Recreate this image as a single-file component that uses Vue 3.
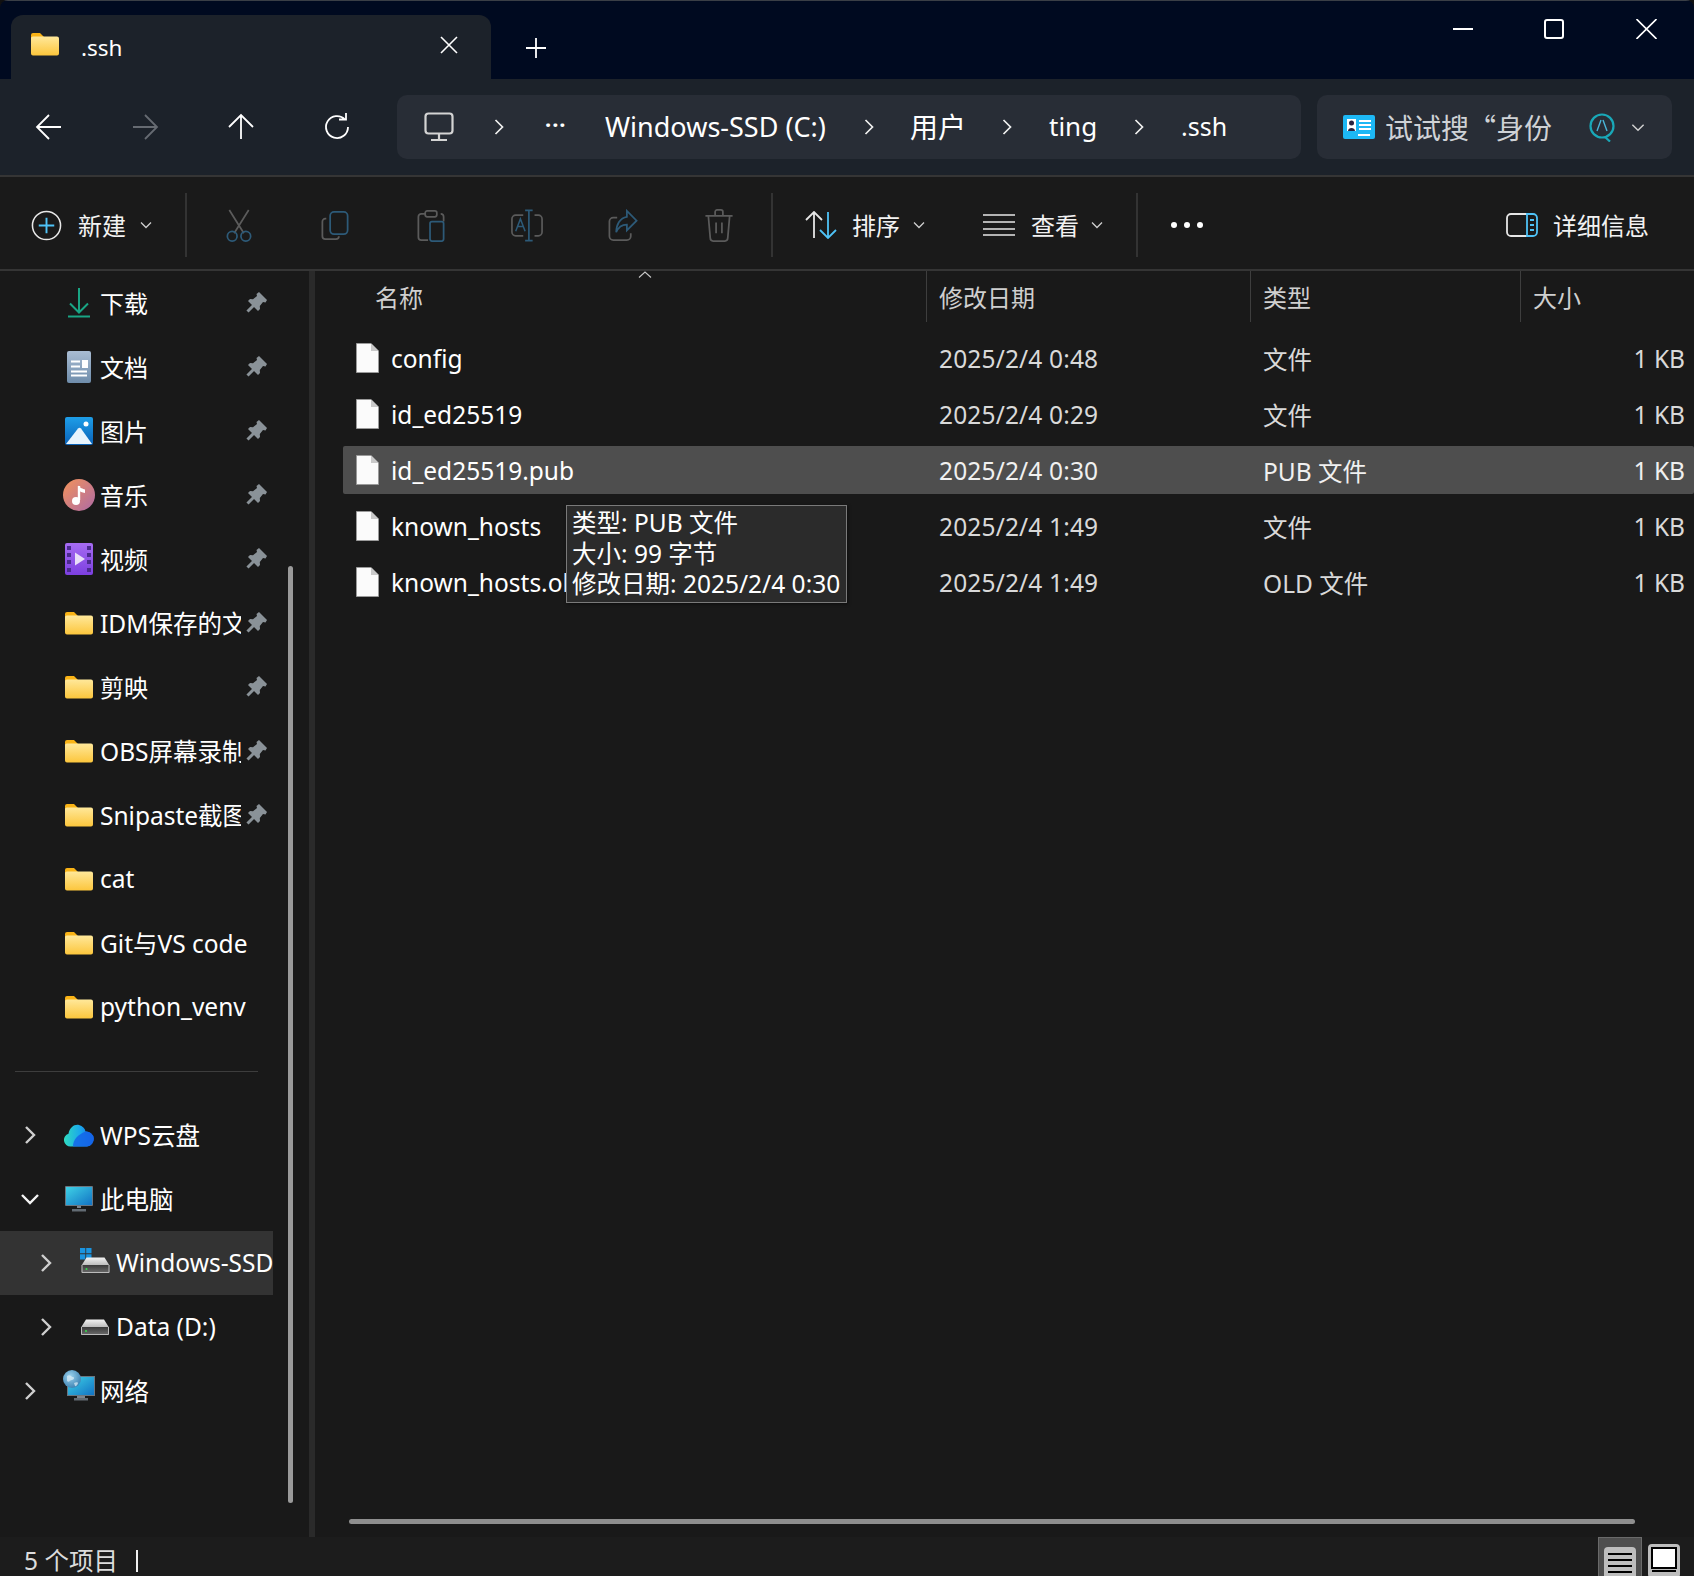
<script setup>
const pinned = [
  { icon: 'i-dl', t: '下载', cjk: true },
  { icon: 'i-doc', t: '文档', cjk: true },
  { icon: 'i-pic', t: '图片', cjk: true },
  { icon: 'i-music', t: '音乐', cjk: true },
  { icon: 'i-video', t: '视频', cjk: true },
  { icon: 'i-folder', t: 'IDM保存的文件' },
  { icon: 'i-folder', t: '剪映', cjk: true },
  { icon: 'i-folder', t: 'OBS屏幕录制' },
  { icon: 'i-folder', t: 'Snipaste截图' },
]
const plain = [
  { icon: 'i-folder', t: 'cat' },
  { icon: 'i-folder', t: 'Git与VS code' },
  { icon: 'i-folder', t: 'python_venv' },
]
const tree = [
  { icon: 'i-cloud', t: 'WPS云盘', arrow: 'r' },
  { icon: 'i-pc', t: '此电脑', arrow: 'd' },
  { icon: 'i-win', t: 'Windows-SSD (C:)', arrow: 'r', sub: true, sel: true },
  { icon: 'i-drive', t: 'Data (D:)', arrow: 'r', sub: true },
  { icon: 'i-net', t: '网络', arrow: 'r' },
]
const files = [
  { n: 'config', d: '2025/2/4 0:48', ty: '文件' },
  { n: 'id_ed25519', d: '2025/2/4 0:29', ty: '文件' },
  { n: 'id_ed25519.pub', d: '2025/2/4 0:30', ty: 'PUB 文件', sel: true },
  { n: 'known_hosts', d: '2025/2/4 1:49', ty: '文件' },
  { n: 'known_hosts.old', d: '2025/2/4 1:49', ty: 'OLD 文件' },
]
</script>

<template>
  <div class="win">
    <svg class="defs" width="0" height="0">
      <defs>
        <linearGradient id="gF" x1="0" y1="0" x2="0" y2="1"><stop offset="0" stop-color="#ffe89a"/><stop offset="1" stop-color="#fcc63c"/></linearGradient>
        <linearGradient id="gD" x1="0" y1="0" x2="0" y2="1"><stop offset="0" stop-color="#a9bdd3"/><stop offset="1" stop-color="#6f8dab"/></linearGradient>
        <linearGradient id="gP" x1="0" y1="0" x2="0" y2="1"><stop offset="0" stop-color="#1e9ee8"/><stop offset="1" stop-color="#0a62b8"/></linearGradient>
        <linearGradient id="gM" x1="0" y1="0" x2="1" y2="1"><stop offset="0" stop-color="#f3935a"/><stop offset="1" stop-color="#ae6aa6"/></linearGradient>
        <linearGradient id="gV" x1="0" y1="0" x2="0" y2="1"><stop offset="0" stop-color="#a66cf2"/><stop offset="1" stop-color="#7c3fe0"/></linearGradient>
        <linearGradient id="gC" x1="0" y1="0" x2="1" y2="0"><stop offset="0" stop-color="#2fdcc0"/><stop offset=".55" stop-color="#1aa7ec"/><stop offset="1" stop-color="#1464e8"/></linearGradient>
        <linearGradient id="gS" x1="0" y1="0" x2="1" y2="1"><stop offset="0" stop-color="#3fd2e6"/><stop offset="1" stop-color="#1273c4"/></linearGradient>
        <linearGradient id="gH" x1="0" y1="0" x2="0" y2="1"><stop offset="0" stop-color="#f2f2f2"/><stop offset="1" stop-color="#b9b9b9"/></linearGradient>
        <linearGradient id="gB" x1="0" y1="0" x2="0" y2="1"><stop offset="0" stop-color="#3a3a3a"/><stop offset="1" stop-color="#6d6d6d"/></linearGradient>
        <radialGradient id="gG" cx=".4" cy=".35" r=".7"><stop offset="0" stop-color="#9cd3ee"/><stop offset="1" stop-color="#3a7fb0"/></radialGradient>

        <symbol id="i-folder" viewBox="0 0 28 24">
          <path d="M0 3a2 2 0 0 1 2-2h7l4 4v3H0z" fill="#f9b316"/>
          <path d="M0 7a2 2 0 0 1 2-2.500h24a2 2 0 0 1 2 2V21.500a2 2 0 0 1-2 2H2a2 2 0 0 1-2-2z" fill="url(#gF)"/>
        </symbol>
        <symbol id="i-dl" viewBox="0 0 28 32">
          <path d="M14 1V25M5 16.500L14 25.500L23 16.500" fill="none" stroke="#19a584" stroke-width="2"/>
          <path d="M3 29.500H25" stroke="#19a584" stroke-width="2"/>
        </symbol>
        <symbol id="i-doc" viewBox="0 0 28 32">
          <rect x="2" y="0" width="24" height="32" rx="2" fill="url(#gD)"/>
          <path d="M6 10.500H15M6 15.500H15M6 20.500H22" stroke="#fff" stroke-width="2"/>
          <path d="M6 24.500H22" stroke="#fff" stroke-width="2"/>
          <rect x="17" y="9" width="6" height="8" fill="#fff"/>
        </symbol>
        <symbol id="i-pic" viewBox="0 0 28 28">
          <rect width="28" height="28" rx="2" fill="url(#gP)"/>
          <circle cx="21" cy="7" r="2.500" fill="#fff"/>
          <path d="M1 27L13 11.500a2 2 0 0 1 3 0L27 27z" fill="#e8f4fd"/>
        </symbol>
        <symbol id="i-music" viewBox="0 0 32 32">
          <circle cx="16" cy="16" r="16" fill="url(#gM)"/>
          <path d="M16 7v14" stroke="#fff" stroke-width="2.400"/>
          <path d="M15 6.500c2 3 5 3 7 4v3.500c-3-.5-5-1.500-7-3z" fill="#fff"/>
          <circle cx="13" cy="22" r="4" fill="#fff"/>
        </symbol>
        <symbol id="i-video" viewBox="0 0 28 32">
          <rect width="28" height="32" rx="2" fill="url(#gV)"/>
          <g fill="#4b2a8e">
            <rect x="2" y="3" width="4" height="4"/><rect x="2" y="10" width="4" height="4"/><rect x="2" y="17" width="4" height="4"/><rect x="2" y="25" width="4" height="4"/>
            <rect x="22" y="3" width="4" height="4"/><rect x="22" y="10" width="4" height="4"/><rect x="22" y="17" width="4" height="4"/><rect x="22" y="25" width="4" height="4"/>
          </g>
          <path d="M10 9.500L20 16L10 22.500z" fill="#e8def8"/>
        </symbol>
        <symbol id="i-cloud" viewBox="0 0 30 23">
          <path d="M6.500 22.500A6.500 6.500 0 0 1 4.500 9.800C5.500 3.500 10.500 0 15 1c3.500.8 6 3.500 6.500 6.500A7.500 7.500 0 0 1 23 22.500z" fill="url(#gC)"/>
          <path d="M9 22.500c0-7 5-12 12.500-15A7.500 7.500 0 0 1 23 22.500z" fill="#1464e8" opacity=".85"/>
        </symbol>
        <symbol id="i-pc" viewBox="0 0 28 26">
          <rect width="28" height="20" rx="1" fill="#6b7680"/>
          <rect x="1" y="1" width="26" height="18" fill="url(#gS)"/>
          <path d="M12 20h4v2h-4z" fill="#7b858e"/>
          <path d="M7 23h14v2.500H7z" fill="#626b73"/>
        </symbol>
        <symbol id="i-drive" viewBox="0 0 28 16">
          <path d="M5 .5h18l5 8H0z" fill="url(#gH)"/>
          <rect x="0" y="8" width="28" height="8" rx="1" fill="url(#gB)"/>
          <path d="M.5 8v7.500h27V8" fill="none" stroke="#bbb"/>
          <circle cx="5" cy="12" r="1" fill="#33e04a"/>
        </symbol>
        <symbol id="i-win" viewBox="0 0 30 26">
          <path d="M0 0h5.300v5.300H0zM6.200 0h5.300v5.300H6.200zM0 6.200h5.300v5.300H0zM6.200 6.200h5.300v5.300H6.200z" fill="#1a94e0"/>
          <g transform="translate(1.500 9)">
            <path d="M5 .5h18l5 8H0z" fill="url(#gH)"/>
            <rect x="0" y="8" width="28" height="8" rx="1" fill="url(#gB)"/>
            <path d="M.5 8v7.500h27V8" fill="none" stroke="#bbb"/>
            <circle cx="5" cy="12" r="1" fill="#33e04a"/>
          </g>
        </symbol>
        <symbol id="i-net" viewBox="0 0 32 32">
          <rect x="4" y="6" width="28" height="20" fill="#6b7680"/>
          <rect x="5" y="7" width="26" height="18" fill="url(#gS)"/>
          <path d="M14 26h8v2h-8z" fill="#7b858e"/>
          <path d="M11 28h14v2.500H11z" fill="#626b73"/>
          <circle cx="9" cy="9" r="9" fill="url(#gG)"/>
          <path d="M4 6c3-2 4 1 6 1s1 3-1 3-3 3-5 1zM11 13c2-1 4-1 4 0s-2 4-3 3z" fill="#dfeff8" opacity=".7"/>
        </symbol>
        <symbol id="i-pin" viewBox="0 0 21 21">
          <path d="M13 0L21 8L19.500 10.500L17 10L13.800 14L14 17L12 19L2 9L4 7L7 7.200L11 4L10.500 2z" fill="#8a9298"/>
          <path d="M7.500 13.500L1.500 19.500" stroke="#8a9298" stroke-width="3"/>
        </symbol>
        <symbol id="i-file" viewBox="0 0 23 30">
          <path d="M.5.500H15L22.500 8V29.500H.5z" fill="#fbfbfb" stroke="#9a9a9a"/>
          <path d="M15 .5V8H22.500z" fill="#c9c9c9"/>
        </symbol>
        <symbol id="i-r" viewBox="0 0 12 20"><path d="M2 2L10 10L2 18" fill="none" stroke="#cfcfcf" stroke-width="2.400"/></symbol>
        <symbol id="i-a" viewBox="0 0 10 16"><path d="M1.500 1L8.500 8L1.500 15" fill="none" stroke="#f0f0f0" stroke-width="1.700"/></symbol>
        <symbol id="i-d" viewBox="0 0 20 12"><path d="M2 2L10 10L18 2" fill="none" stroke="#f4f4f4" stroke-width="2.400"/></symbol>
        <symbol id="i-cv" viewBox="0 0 12 8"><path d="M1 1.500L6 6.500L11 1.500" fill="none" stroke="#cfcfcf" stroke-width="1.300"/></symbol>
      </defs>
    </svg>

    <header class="titlebar">
      <div class="tab">
        <svg class="tab-folder"><use href="#i-folder"/></svg>
        <span class="tab-text">.ssh</span>
        <svg class="tab-x" viewBox="0 0 18 18"><path d="M1 1L17 17M17 1L1 17" stroke="#fff" stroke-width="1.600"/></svg>
      </div>
      <svg class="tab-plus" viewBox="0 0 20 20"><path d="M10 0V20M0 10H20" stroke="#fff" stroke-width="1.800"/></svg>
      <div class="controls">
        <svg class="c-min" viewBox="0 0 20 2"><path d="M0 1H20" stroke="#fff" stroke-width="2"/></svg>
        <svg class="c-max" viewBox="0 0 20 20"><rect x="1" y="1" width="18" height="18" rx="2" fill="none" stroke="#fff" stroke-width="2"/></svg>
        <svg class="c-close" viewBox="0 0 20 20"><path d="M0 0L20 20M20 0L0 20" stroke="#fff" stroke-width="1.600"/></svg>
      </div>
    </header>

    <nav class="nav">
      <div class="nav-btns">
        <svg class="nb" viewBox="0 0 26 26"><path d="M1 13H25M13 1L1 13L13 25" fill="none" stroke="#fff" stroke-width="1.800"/></svg>
        <svg class="nb" viewBox="0 0 26 26"><path d="M1 13H25M13 1L25 13L13 25" fill="none" stroke="#666b72" stroke-width="1.800"/></svg>
        <svg class="nb" viewBox="0 0 26 26"><path d="M13 25V1M1 13L13 1L25 13" fill="none" stroke="#fff" stroke-width="1.800"/></svg>
        <svg class="nb" viewBox="0 0 26 26"><path d="M21 5.500A11 11 0 1 0 24 13M15 5.500H22V-1" fill="none" stroke="#fff" stroke-width="1.800"/></svg>
      </div>
      <div class="addr">
        <svg class="a-pc" viewBox="0 0 30 30"><rect x="1.500" y="1.500" width="27" height="20" rx="3" fill="none" stroke="#d4d4d4" stroke-width="2.200"/><path d="M15 22V27M7 28H23" stroke="#d4d4d4" stroke-width="2.200"/></svg>
        <svg class="a-ch ch1"><use href="#i-a"/></svg>
        <span class="a-dots">···</span>
        <span class="a-t t1">Windows-SSD (C:)</span>
        <svg class="a-ch ch2"><use href="#i-a"/></svg>
        <span class="a-t t2 z">用户</span>
        <svg class="a-ch"><use href="#i-a"/></svg>
        <span class="a-t t3">ting</span>
        <svg class="a-ch"><use href="#i-a"/></svg>
        <span class="a-t t4">.ssh</span>
      </div>
      <div class="search">
        <svg class="s-card" viewBox="0 0 32 24"><rect width="32" height="24" rx="2" fill="#1db8f5"/><path d="M4 4h9v12H4z" fill="#fff"/><circle cx="8.500" cy="8" r="2.500" fill="#2a2340"/><path d="M5 16c0-4 7-4 7 0z" fill="#2a2340"/><path d="M16 6h12M16 10h12M16 14h12" stroke="#fff" stroke-width="2"/><path d="M15 20h12" stroke="#fff" stroke-width="2"/></svg>
        <span class="s-t z">试试搜</span>
        <span class="s-t s-t2 z">“身份</span>
        <svg class="s-q" viewBox="0 0 26 30"><circle cx="13" cy="14" r="11.500" fill="none" stroke="#19a8b8" stroke-width="2.200"/><path d="M16 25L21 29.500" stroke="#19a8b8" stroke-width="2.200"/><path d="M8 19L12 8M14 8L18 19" fill="none" stroke="#4bb5d8" stroke-width="1.400"/></svg>
        <svg class="s-cv"><use href="#i-cv"/></svg>
      </div>
    </nav>

    <div class="toolbar">
      <svg class="t-new" viewBox="0 0 32 32"><circle cx="16" cy="16" r="14.500" fill="none" stroke="#e8e8e8" stroke-width="1.600"/><path d="M16 8V24M8 16H24" stroke="#4fc3f7" stroke-width="2"/></svg>
      <span class="t-lab z l-new">新建</span>
      <svg class="t-cv cv-new"><use href="#i-cv"/></svg>
      <i class="t-sep sep1"></i>
      <svg class="t-ic ic-cut" viewBox="0 0 30 34"><path d="M5 1L20 25M25 1L10 25" stroke="#5b5b5b" stroke-width="1.800"/><circle cx="8" cy="28" r="5" fill="none" stroke="#2d5a78" stroke-width="1.800"/><circle cx="22" cy="28" r="5" fill="none" stroke="#2d5a78" stroke-width="1.800"/></svg>
      <svg class="t-ic" viewBox="0 0 30 34"><rect x="10" y="3" width="18" height="23" rx="4" fill="none" stroke="#2d5a78" stroke-width="1.800"/><path d="M6 10H5a3 3 0 0 0-3 3v15a3 3 0 0 0 3 3h11a3 3 0 0 0 3-3" fill="none" stroke="#5b5b5b" stroke-width="1.800"/></svg>
      <svg class="t-ic" viewBox="0 0 30 34"><path d="M9 5H5a3 3 0 0 0-3 3v21a3 3 0 0 0 3 3h7M25 5a3 3 0 0 1 3 3v5" fill="none" stroke="#5b5b5b" stroke-width="1.800"/><rect x="9" y="2" width="12" height="6" rx="2" fill="none" stroke="#5b5b5b" stroke-width="1.800"/><rect x="14" y="13" width="14" height="20" rx="2" fill="none" stroke="#2d5a78" stroke-width="1.800"/></svg>
      <svg class="t-ic" viewBox="0 0 34 34"><path d="M13 6H5a4 4 0 0 0-4 4v14a4 4 0 0 0 4 4h8M25 6h4a4 4 0 0 1 4 4v14a4 4 0 0 1-4 4h-4" fill="none" stroke="#5b5b5b" stroke-width="1.800"/><path d="M19 1V33M15 1H23M15 33H23" stroke="#2d5a78" stroke-width="1.800"/><path d="M5 23L10 10L15 23M7 18H13" fill="none" stroke="#2d5a78" stroke-width="1.600"/></svg>
      <svg class="t-ic" viewBox="0 0 30 34"><path d="M9 9H5a4 4 0 0 0-4 4v15a4 4 0 0 0 4 4h14a4 4 0 0 0 4-4v-3" fill="none" stroke="#5b5b5b" stroke-width="1.800"/><path d="M19 2L29 12L19 22V16C14 16 10 19 8 24C8 16 12 9 19 8z" fill="none" stroke="#2d5a78" stroke-width="1.800"/></svg>
      <svg class="t-ic" viewBox="0 0 30 34"><path d="M1 7H29M11 7V3a2 2 0 0 1 2-2h4a2 2 0 0 1 2 2v4M4 7L6 30a3 3 0 0 0 3 3h12a3 3 0 0 0 3-3L26 7M12 14V25M18 14V25" fill="none" stroke="#5b5b5b" stroke-width="1.800"/></svg>
      <i class="t-sep sep2"></i>
      <svg class="t-sort" viewBox="0 0 32 28"><path d="M9 27V1M1 9L9 1L17 9" fill="none" stroke="#e6e6e6" stroke-width="1.800"/><path d="M23 1V27M15 19L23 27L31 19" fill="none" stroke="#4fc3f7" stroke-width="1.800"/></svg>
      <span class="t-lab z l-sort">排序</span>
      <svg class="t-cv cv-sort"><use href="#i-cv"/></svg>
      <svg class="t-list" viewBox="0 0 32 22"><path d="M0 1H32M0 8H32M0 15H32M0 21H32" stroke="#e6e6e6" stroke-width="1.600"/></svg>
      <span class="t-lab z l-view">查看</span>
      <svg class="t-cv cv-view"><use href="#i-cv"/></svg>
      <i class="t-sep sep3"></i>
      <div class="t-dots"><i></i><i></i><i></i></div>
      <svg class="t-det" viewBox="0 0 32 24"><path d="M21 1H5a4 4 0 0 0-4 4V19a4 4 0 0 0 4 4H21" fill="none" stroke="#e6e6e6" stroke-width="1.800"/><path d="M21 1h6a4 4 0 0 1 4 4V19a4 4 0 0 1-4 4h-6z" fill="none" stroke="#4fc3f7" stroke-width="1.800"/><path d="M24 7h4M24 12h4M24 17h4" stroke="#4fc3f7" stroke-width="1.800"/></svg>
      <span class="t-lab z l-det">详细信息</span>
    </div>

    <div class="body">
      <aside class="side">
        <div v-for="it in pinned" :key="it.t" class="s-row">
          <svg class="s-icon" :class="it.icon"><use :href="'#' + it.icon"/></svg>
          <span class="s-label" :class="{ z: it.cjk }">{{ it.t }}</span>
          <svg class="s-pin"><use href="#i-pin"/></svg>
        </div>
        <div v-for="it in plain" :key="it.t" class="s-row">
          <svg class="s-icon" :class="it.icon"><use :href="'#' + it.icon"/></svg>
          <span class="s-label wide">{{ it.t }}</span>
        </div>
        <div class="s-div"></div>
        <div v-for="it in tree" :key="it.t" class="s-row tree" :class="{ sub: it.sub, sel: it.sel }">
          <svg class="s-arrow" :class="it.arrow"><use :href="it.arrow === 'd' ? '#i-d' : '#i-r'"/></svg>
          <svg class="s-icon" :class="it.icon"><use :href="'#' + it.icon"/></svg>
          <span class="s-label wide">{{ it.t }}</span>
        </div>
        <div class="s-scroll"></div>
      </aside>
      <div class="split"></div>
      <main class="main">
        <div class="head">
          <div class="h-name z">名称</div>
          <div class="h-col z">修改日期</div>
          <div class="h-col z">类型</div>
          <div class="h-col z">大小</div>
          <svg class="caret" viewBox="0 0 14 7"><path d="M1 6.500L7 1L13 6.500" fill="none" stroke="#c8c8c8" stroke-width="1.100"/></svg>
        </div>
        <div class="list">
          <div v-for="f in files" :key="f.n" class="row" :class="{ sel: f.sel }">
            <div class="f-name">
              <svg class="f-ic"><use href="#i-file"/></svg>
              <span>{{ f.n }}</span>
            </div>
            <div class="f-date">{{ f.d }}</div>
            <div class="f-type">{{ f.ty }}</div>
            <div class="f-size">1 KB</div>
          </div>
        </div>
        <div class="tip">
          <div>类型: PUB 文件</div>
          <div>大小: 99 字节</div>
          <div>修改日期: 2025/2/4 0:30</div>
        </div>
        <div class="h-scroll"></div>
      </main>
    </div>

    <footer class="status">
      <span class="st-t">5 个项目</span>
      <i class="st-bar"></i>
      <div class="views">
        <div class="v-btn on">
          <svg class="v1" viewBox="0 0 32 30"><rect width="32" height="34" rx="4" fill="#bdbdbd"/><path d="M4 7H28M4 13H28M4 19H28M4 25H28" stroke="#000" stroke-width="2"/></svg>
        </div>
        <div class="v-btn off">
          <svg class="v2" viewBox="0 0 32 32"><rect width="32" height="34" rx="4" fill="#bdbdbd"/><rect x="4" y="4" width="24" height="20" fill="#fff" stroke="#000" stroke-width="2"/><path d="M4 27H28" stroke="#000" stroke-width="2"/></svg>
        </div>
      </div>
    </footer>
  </div>
</template>

<style>
html, body { margin: 0; background: #111; }
</style>

<style scoped>
.win {
  position: relative;
  width: 1694px;
  height: 1576px;
  display: flex;
  flex-direction: column;
  overflow: hidden;
  background: #191919;
  color: #fff;
  font-family: "Noto Sans", "Noto Sans CJK SC", sans-serif;
  font-size: 24.5px;
  border-radius: 8px 8px 0 0;
}
.defs { position: absolute; }
.z { font-family: "Noto Sans CJK SC", sans-serif; font-size: 24px; }

.titlebar {
  flex: 0 0 79px;
  box-sizing: border-box;
  display: flex;
  align-items: flex-end;
  background: #000a20;
  border-top: 1px solid #3a3f46;
  padding-left: 11px;
}
.tab {
  width: 480px;
  height: 64px;
  box-sizing: border-box;
  padding-left: 20px;
  display: flex;
  align-items: center;
  background: #1c222a;
  border-radius: 12px 12px 0 0;
}
.tab-folder { width: 28px; height: 24px; margin-top: -6px; }
.tab-text { margin-left: 22px; width: 40px; font-size: 22.500px; margin-top: 1px; }
.tab-x { width: 18px; height: 18px; margin-left: 319px; margin-top: -4px; }
.tab-plus { width: 20px; height: 20px; margin: 0 0 21px 35px; }
.controls {
  margin-left: auto;
  align-self: flex-start;
  display: flex;
  align-items: center;
  padding: 18px 37px 0 0;
}
.c-min { width: 20px; height: 2px; margin-right: 71px; }
.c-max { width: 20px; height: 20px; margin-right: 72px; }
.c-close { width: 21px; height: 20px; }

.nav {
  flex: 0 0 96px;
  box-sizing: border-box;
  display: flex;
  align-items: flex-start;
  background: #1c222a;
  padding: 16px 22px 0 0;
}
.nav-btns {
  width: 397px;
  height: 64px;
  flex: none;
  box-sizing: border-box;
  padding-left: 36px;
  display: flex;
  align-items: center;
  gap: 70px;
}
.nb { width: 26px; height: 26px; overflow: visible; }
.addr {
  width: 904px;
  height: 64px;
  flex: none;
  box-sizing: border-box;
  background: #282d36;
  border-radius: 10px;
  display: flex;
  align-items: center;
  padding-left: 27px;
}
.a-pc { width: 30px; height: 30px; flex: none; }
.a-ch { width: 10px; height: 16px; flex: none; margin-left: 37px; }
.a-ch.ch1 { margin-left: 40px; }
.a-ch.ch2 { margin-left: 23px; }
.a-dots { margin-left: 41px; width: 24px; font-size: 22px; font-weight: 700; letter-spacing: 1px; margin-top: -6px; flex: none; }
.a-t { color: #fff; white-space: nowrap; flex: none; margin-top: -2px; }
.t1 { margin-left: 36px; width: 236px; font-size: 27px; }
.t2 { margin-left: 36px; width: 55px; }
.t2.z { font-size: 28px; }
.t3 { margin-left: 37px; width: 48px; font-size: 26px; }
.t4 { margin-left: 37px; font-size: 25px; }
.search {
  margin-left: 16px;
  flex: none;
  width: 355px;
  height: 64px;
  box-sizing: border-box;
  background: #282d36;
  border-radius: 10px;
  display: flex;
  align-items: center;
  padding-left: 26px;
  color: #cfd2d6;
}
.s-card { width: 32px; height: 24px; flex: none; }
.s-t { margin-left: 10px; margin-top: -1px; }
.s-t.z { font-size: 28px; }
.s-t2 { margin-left: -1px; }
.s-q { width: 26px; height: 30px; margin-left: 37px; flex: none; }
.s-cv { width: 14px; height: 9px; margin-left: 16px; flex: none; }

.toolbar {
  flex: 0 0 96px;
  box-sizing: border-box;
  display: flex;
  align-items: center;
  background: #1a1a1a;
  border-top: 2px solid #353535;
  border-bottom: 2px solid #353535;
  padding: 4px 0 0 31px;
  position: relative;
}
.t-new { width: 31px; height: 31px; flex: none; }
.t-lab { color: #f2f2f2; white-space: nowrap; margin-top: -2px; }
.l-new { margin-left: 16px; width: 50px; }
.t-cv { width: 12px; height: 8px; flex: none; }
.cv-new { margin-left: 12px; }
.t-sep { flex: none; width: 2px; height: 64px; background: #333; }
.sep1 { margin-left: 33px; }
.t-ic { width: 32px; height: 33px; flex: none; margin-left: 64px; }
.ic-cut { margin-left: 36px; }
.sep2 { margin-left: 36px; }
.t-sort { width: 32px; height: 28px; flex: none; margin-left: 32px; }
.l-sort { margin-left: 15px; width: 50px; }
.cv-sort { margin-left: 11px; }
.t-list { width: 32px; height: 22px; flex: none; margin-left: 58px; }
.l-view { margin-left: 16px; width: 50px; }
.cv-view { margin-left: 10px; }
.sep3 { margin-left: 33px; }
.t-dots { display: flex; gap: 7px; margin-left: 33px; }
.t-dots i { width: 6px; height: 6px; border-radius: 50%; background: #fff; display: block; }
.t-det { width: 32px; height: 24px; flex: none; margin-left: 303px; }
.l-det { margin-left: 15px; }

.body { flex: 1; display: flex; min-height: 0; position: relative; }
.side { width: 309px; flex: none; position: relative; overflow: hidden; }
.s-row {
  height: 64px;
  width: 273px;
  display: flex;
  align-items: center;
  position: relative;
  box-sizing: border-box;
  padding-left: 65px;
}
.s-row.tree.sub { padding-left: 81px; }
.s-row.sel { background: #333; }
.s-icon { width: 28px; height: 24px; flex: none; overflow: visible; }
.s-icon.i-dl, .s-icon.i-doc, .s-icon.i-video { height: 32px; }
.s-icon.i-pic { height: 28px; }
.s-icon.i-music { width: 32px; height: 32px; margin: 0 -2px; }
.s-icon.i-cloud { width: 30px; height: 23px; margin: 0 -1px; }
.s-icon.i-win { width: 30px; height: 26px; margin: -4px -1px 0; }
.s-icon.i-drive { height: 16px; }
.s-icon.i-pc { height: 26px; }
.s-icon.i-net { width: 32px; height: 32px; margin: -10px -2px 0; }
.s-label {
  margin: -2px 0 0 7px;
  width: 141px;
  overflow: hidden;
  white-space: nowrap;
  flex: none;
}
.s-label.wide { width: 170px; }
.s-row.sub .s-label.wide { width: 157px; }
.s-pin { width: 21px; height: 21px; position: absolute; left: 246px; top: 21px; }
.s-arrow { position: absolute; left: 24px; top: 22px; width: 12px; height: 20px; }
.s-arrow.d { width: 20px; height: 12px; left: 20px; top: 26px; }
.s-row.sub .s-arrow { left: 40px; }
.s-div { height: 1px; margin: 32px 0 31px 15px; width: 243px; background: #3d3d3d; }
.s-scroll {
  position: absolute;
  left: 288px;
  top: 295px;
  width: 5px;
  height: 937px;
  background: #9a9a9a;
  border-radius: 3px;
}
.split { width: 6px; flex: none; background: #2a2a2a; }
.main { flex: 1; position: relative; min-width: 0; }

.head {
  display: grid;
  grid-template-columns: 611px 324px 270px 174px;
  height: 51px;
  color: #cfcfcf;
  position: relative;
}
.h-name { padding-left: 60px; line-height: 51px; }
.h-col { padding-left: 12px; border-left: 1px solid #3e3e3e; line-height: 51px; }
.caret { position: absolute; left: 323px; top: 0; width: 14px; height: 7px; }

.list { padding: 12px 0 0 28px; display: flex; flex-direction: column; gap: 8px; }
.row {
  height: 48px;
  display: grid;
  grid-template-columns: 583px 324px 270px 165px;
  align-items: center;
  border-radius: 2px;
}
.row.sel { background: #4e4e4e; }
.f-name { display: flex; align-items: center; padding-left: 13px; white-space: nowrap; }
.f-ic { width: 23px; height: 30px; flex: none; margin-right: 12px; }
.f-date, .f-type { padding-left: 13px; }
.f-date { letter-spacing: .15px; }
.f-date, .f-type, .f-size { color: #d9d9d9; }
.f-size { text-align: right; }
.row.sel .f-date, .row.sel .f-type, .row.sel .f-size { color: #f0f0f0; }

.tip {
  position: absolute;
  left: 251px;
  top: 234px;
  width: 281px;
  height: 98px;
  box-sizing: border-box;
  padding: 2px 0 0 5px;
  background: #2b2b2b;
  border: 1px solid #7a7a7a;
  line-height: 30.500px;
  white-space: nowrap;
  box-shadow: 1px 1px 3px rgba(0, 0, 0, .5);
}
.h-scroll {
  position: absolute;
  left: 34px;
  top: 1248px;
  width: 1286px;
  height: 5px;
  background: #8e8e8e;
  border-radius: 3px;
}

.status {
  flex: 0 0 39px;
  display: flex;
  align-items: flex-start;
  background: #1c1c1c;
  box-sizing: border-box;
  padding-left: 24px;
  overflow: hidden;
}
.st-t { line-height: 48px; color: #dcdcdc; }
.st-bar { width: 2px; height: 22px; background: #f0f0f0; margin: 13px 0 0 18px; }
.views { margin-left: auto; display: flex; padding-right: 14px; }
.v-btn { height: 39px; box-sizing: border-box; display: flex; justify-content: center; align-items: flex-start; padding-top: 9px; }
.v-btn.on { width: 44px; background: #4e4e4e; border: 1px solid #6a6a6a; border-bottom: 0; margin-right: 6px; }
.v-btn.off { width: 32px; }
.v1 { width: 32px; height: 30px; flex: none; }
.v2 { width: 32px; height: 32px; flex: none; margin-top: -2px; }
</style>
